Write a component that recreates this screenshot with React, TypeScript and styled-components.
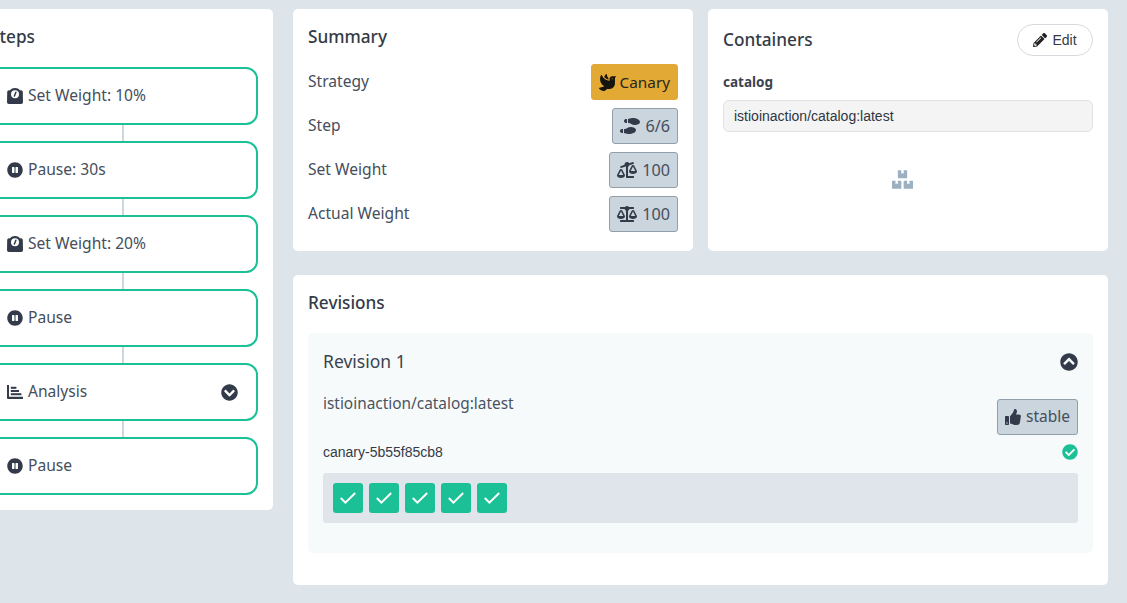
import React from 'react';
import styled, { createGlobalStyle } from 'styled-components';
import {
  FaPauseCircle, FaChevronCircleDown, FaChevronCircleUp, FaDove,
  FaShoePrints, FaBalanceScale, FaBalanceScaleLeft, FaPencilAlt, FaBoxes, FaThumbsUp, FaCheckCircle,
} from 'react-icons/fa';

const Global = createGlobalStyle`
  html, body { margin: 0; padding: 0; height: 100%; overflow: hidden; background: #dee5ea; }
  body { font-family: "Noto Sans", sans-serif; color: #3a4350; }
  * { box-sizing: border-box; }
`;
const Page = styled.div`
  width: 1127px; height: 603px; overflow: hidden;
  display: flex; gap: 20px; padding: 9px 19px 0 0;
`;
const StepsCard = styled.section`
  width: 273px; height: 501px; flex: none; background: #fff; border-radius: 0 5px 5px 0;
  padding: 17px 15px 0 0; overflow: hidden;
`;
const CardTitle = styled.h3`
  margin: 0; font-size: 17.2px; line-height: 22px; font-weight: 500; color: #343b46;
`;
const StepsTitle = styled(CardTitle)`margin: 0 0 19px -10px;`;
const Step = styled.div`
  height: 58px; margin-left: -20px; border: 2px solid #1bc096; border-radius: 12px;
  display: flex; align-items: center; padding: 0 18px 2px 25px; gap: 5px;
  font-size: 15.6px; color: #454e5c;
  & > svg:first-child { margin-top: 2px; color: #333b4a; flex: none; }
`;
const ChevronSlot = styled.span`margin-left: auto; margin-top: 2px; display: flex; color: #333b4a;`;
const Connector = styled.div`width: 2px; height: 16px; margin-left: 122px; background: #ced6dd;`;
const Right = styled.div`flex: 1; display: flex; flex-direction: column; gap: 24px; min-width: 0;`;
const TopRow = styled.div`display: flex; gap: 15px;`;
const Card = styled.section`background: #fff; border-radius: 5px; padding: 15px;`;
const SummaryCard = styled(Card)`width: 400px; height: 242px; padding-top: 17px;`;
const Row = styled.div`
  display: flex; align-items: center; justify-content: space-between; height: 44px;
  font-size: 15.6px; color: #454e5c;
`;
const RowLabel = styled.span`margin-top: -2px;`;
const Rows = styled.div`margin-top: 12px;`;
const Pill = styled.div<{ $tone?: 'gold' }>`
  height: 36px; display: inline-flex; align-items: center; gap: ${p => (p.$tone ? '4px' : '5px')}; padding: 0 7px;
  font-size: ${p => (p.$tone ? '15.3px' : '16.2px')}; border-radius: 3px; color: ${p => (p.$tone ? '#26251f' : '#454e5c')};
  background: ${p => (p.$tone ? '#e3a935' : '#cbd5dd')};
  border: 1px solid ${p => (p.$tone ? '#e3a935' : '#8fa0ac')};
  svg { color: ${p => (p.$tone ? '#15140f' : '#333b4a')}; flex: none; }
`;
const ContainersCard = styled(Card)`flex: 1; height: 242px; padding-top: 15px;`;
const Head = styled.div`display: flex; justify-content: space-between; align-items: center; height: 32px;`;
const EditBtn = styled.button`
  height: 32px; width: 76px; border: 1px solid #d6dadf; border-radius: 16px; background: #fff;
  display: flex; align-items: center; justify-content: center; gap: 5px;
  font: 14px "Liberation Sans", sans-serif; color: #333b46; padding: 0;
  svg { color: #222; }
`;
const Label = styled.div`margin-top: 16px; font-size: 13.5px; font-weight: 700; line-height: 20px; color: #3a4350;`;
const Field = styled.div`
  margin-top: 8px; height: 32px; background: #f4f4f4; border: 1px solid #dfe3e7; border-radius: 6px;
  padding: 0 10px; display: flex; align-items: center; font: 14px "Liberation Sans", sans-serif; color: #2f3642;
`;
const Center = styled.div`display: flex; justify-content: center; margin-top: 37px; padding-right: 11px; color: #9cb0c1;`;
const RevisionsCard = styled(Card)`height: 310px; padding-top: 17px;`;
const Revision = styled.div`
  margin-top: 19px; height: 220px; background: #f7fafb; border-radius: 5px; padding: 14px 15px;
`;
const RevHead = styled.div`display: flex; justify-content: space-between; align-items: center; height: 30px; color: #333b4a;`;
const RevTitle = styled.div`font-size: 17.5px; font-weight: 400; color: #3a4350; margin-top: -3px;`;
const ImageRow = styled.div`display: flex; justify-content: space-between; margin-top: 14px; height: 45px;`;
const ImageName = styled.div`font-size: 15.4px; line-height: 20px; color: #4a5361; margin-top: 3px;`;
const StablePill = styled(Pill)`margin-top: 8px; font-size: 15.5px; padding-bottom: 2px; svg { margin-top: 2px; }`;
const PodHead = styled.div`
  display: flex; justify-content: space-between; align-items: center; height: 20px; margin-top: 6px;
  font: 14px "Liberation Sans", sans-serif; color: #333b46; svg { color: #1bc096; }
`;
const PodTray = styled.div`
  margin-top: 11px; height: 50px; background: #dfe5ea; border-radius: 3px; padding: 10px; display: flex; gap: 6px;
`;
const Pod = styled.div`
  width: 30px; height: 30px; border-radius: 3px; background: #1bc096;
  display: flex; align-items: center; justify-content: center;
`;

const Check = () => (
  <svg width="16" height="12" viewBox="0 0 16 12"><path d="M.8 6l4.600 4.600L15.200 1" fill="none" stroke="#fff" strokeWidth="2" /></svg>
);
const ScaleIcon = () => (
  <svg width="16" height="16" viewBox="0 0 16 16" fill="currentColor">
    <path d="M3.200 2.200 C4 .9 6 0 8 0 s4 .9 4.800 2.200 H14 a1.800 1.800 0 0 1 1.800 1.600 L16 14.200 A1.800 1.800 0 0 1 14.200 16 H1.800 A1.800 1.800 0 0 1 0 14.200 L.2 3.800 A1.800 1.800 0 0 1 2 2.200z" />
    <circle cx="8" cy="6.200" r="4" fill="#fff" />
    <path d="M7.400 8 8.900 4.200" stroke="currentColor" strokeWidth="1.500" strokeLinecap="round" />
  </svg>
);
const BarsIcon = () => (
  <svg width="16" height="16" viewBox="0 0 16 16" fill="currentColor">
    <path d="M0 1h2v11.800h14V15H1a1 1 0 0 1-1-1z" />
    <rect x="3.800" y="2.800" width="5.600" height="2" />
    <rect x="3.800" y="6" width="8.200" height="2" />
    <rect x="3.800" y="9.200" width="10.600" height="2" />
  </svg>
);

const steps = [
  { icon: <ScaleIcon />, text: 'Set Weight: 10%' },
  { icon: <FaPauseCircle size={16} />, text: 'Pause: 30s' },
  { icon: <ScaleIcon />, text: 'Set Weight: 20%' },
  { icon: <FaPauseCircle size={16} />, text: 'Pause' },
  { icon: <BarsIcon />, text: 'Analysis', more: true },
  { icon: <FaPauseCircle size={16} />, text: 'Pause' },
];

export default function App() {
  return (
    <Page>
      <Global />
      <StepsCard>
        <StepsTitle>Steps</StepsTitle>
        {steps.map((s, i) => (
          <React.Fragment key={i}>
            {i > 0 && <Connector />}
            <Step>
              {s.icon}
              <span>{s.text}</span>
              {s.more && <ChevronSlot><FaChevronCircleDown size={17} /></ChevronSlot>}
            </Step>
          </React.Fragment>
        ))}
      </StepsCard>
      <Right>
        <TopRow>
          <SummaryCard>
            <CardTitle>Summary</CardTitle>
            <Rows>
              <Row><RowLabel>Strategy</RowLabel><Pill $tone="gold"><FaDove size={17} />Canary</Pill></Row>
              <Row><RowLabel>Step</RowLabel><Pill><FaShoePrints size={20} />6/6</Pill></Row>
              <Row><RowLabel>Set Weight</RowLabel><Pill><FaBalanceScaleLeft size={20} />100</Pill></Row>
              <Row><RowLabel>Actual Weight</RowLabel><Pill><FaBalanceScale size={20} />100</Pill></Row>
            </Rows>
          </SummaryCard>
          <ContainersCard>
            <Head><CardTitle>Containers</CardTitle><EditBtn><FaPencilAlt size={14} />Edit</EditBtn></Head>
            <Label>catalog</Label>
            <Field>istioinaction/catalog:latest</Field>
            <Center><FaBoxes size={21} /></Center>
          </ContainersCard>
        </TopRow>
        <RevisionsCard>
          <CardTitle>Revisions</CardTitle>
          <Revision>
            <RevHead><RevTitle>Revision 1</RevTitle><FaChevronCircleUp size={18} /></RevHead>
            <ImageRow>
              <ImageName>istioinaction/catalog:latest</ImageName>
              <StablePill><FaThumbsUp size={16} />stable</StablePill>
            </ImageRow>
            <PodHead>canary-5b55f85cb8<FaCheckCircle size={16} /></PodHead>
            <PodTray>{[0, 1, 2, 3, 4].map(i => <Pod key={i}><Check /></Pod>)}</PodTray>
          </Revision>
        </RevisionsCard>
      </Right>
    </Page>
  );
}
